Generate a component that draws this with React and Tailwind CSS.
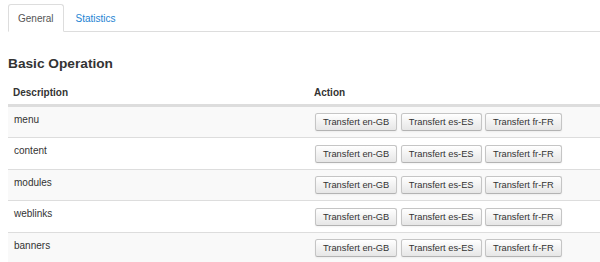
import React from "react";

const rows = [
  { name: "menu", h: "h-[31px]", bg: "bg-[#f9f9f9]" },
  { name: "content", h: "h-[32px]", bg: "bg-white" },
  { name: "modules", h: "h-[31px]", bg: "bg-[#f9f9f9]" },
  { name: "weblinks", h: "h-[32px]", bg: "bg-white" },
  { name: "banners", h: "h-[31px]", bg: "bg-[#f9f9f9]" },
];

const langs = ["en-GB", "es-ES", "fr-FR"];

function Btn({ label }) {
  return (
    <button
      type="button"
      className="h-[18px] px-[7px] border border-[#c5c5c5] border-b-[#b3b3b3] rounded-[2.5px] bg-gradient-to-b from-white to-[#e6e6e6] text-[9.3px] leading-[14px] text-[#333] shadow-[inset_0_1px_0_rgba(255,255,255,0.2),0_1px_2px_rgba(0,0,0,0.05)] whitespace-nowrap"
    >
      Transfert {label}
    </button>
  );
}

export default function App() {
  return (
    <div className="w-[600px] h-[262px] overflow-hidden bg-white pl-[8px] font-['Liberation_Sans',Arial,sans-serif] text-[10px] leading-[14px] text-[#333]">
      <div className="flex pt-[4px] border-b border-[#ddd]">
        <div className="h-[28px] -mb-px px-[9px] pt-px flex items-center border border-[#ddd] border-b-transparent bg-white rounded-t-[3px] text-[#555]">
          General
        </div>
        <div className="h-[28px] -mb-px ml-[2px] px-[10px] pt-px flex items-center text-[#2384d3]">
          Statistics
        </div>
      </div>

      <h3 className="mt-[24px] text-[13.7px] leading-[16px] font-bold text-[#333]">
        Basic Operation
      </h3>

      <div className="flex pt-[14px] pb-[4px] border-b-2 border-[#ddd] font-bold">
        <div className="w-[300px] pl-[5px]">Description</div>
        <div className="pl-[6px]">Action</div>
      </div>

      {rows.map((r) => (
        <div key={r.name} className={`flex items-center border-t border-[#ddd] ${r.h} ${r.bg}`}>
          <div className="w-[300px] pl-[6px] self-start pt-[6px]">{r.name}</div>
          <div className="flex gap-[3.5px] pl-[7px]">
            {langs.map((l) => (
              <Btn key={l} label={l} />
            ))}
          </div>
        </div>
      ))}
    </div>
  );
}
